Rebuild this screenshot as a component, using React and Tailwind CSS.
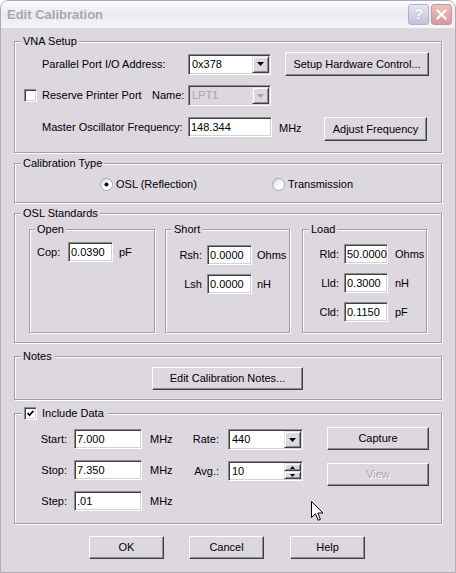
import React from 'react';

function Group({ label, className = '', labelClass = 'ml-[6px]', children }) {
  return (
    <div className={`border border-[#a29ea7] shadow-[inset_1px_1px_0_#fff,1px_1px_0_#fff] ${className}`}>
      <div className={`-mt-[8px] h-[14px] leading-[14px] w-fit px-[2px] bg-[#ddd7df] ${labelClass}`}>{label}</div>
      {children}
    </div>
  );
}

function Sunken({ className = '', bg = 'bg-white', children }) {
  return (
    <div className={`border border-t-[#8d8a92] border-l-[#8d8a92] border-r-white border-b-white shadow-[inset_1px_1px_0_#404040,inset_-1px_-1px_0_#d4d0d8] ${bg} ${className}`}>
      {children}
    </div>
  );
}

function Field({ className = '', value }) {
  return (
    <Sunken className={`flex items-center pl-[2px] ${className}`}>
      <span className="whitespace-nowrap">{value}</span>
    </Sunken>
  );
}

function Raised({ className = '', children }) {
  return (
    <div className={`border border-t-[#e4e0e8] border-l-[#e4e0e8] border-r-[#404040] border-b-[#404040] shadow-[inset_1px_1px_0_#fff,inset_-1px_-1px_0_#8d8a92] bg-[#ddd7df] flex items-center justify-center ${className}`}>
      {children}
    </div>
  );
}

function Combo({ className = '', value, disabled }) {
  return (
    <Sunken className={`flex p-[1px] ${className}`} bg={disabled ? 'bg-[#ddd7df]' : 'bg-white'}>
      <div className={`flex-1 flex items-center pl-[2px] ${disabled ? 'text-[#a8a4ac]' : ''}`}>{value}</div>
      <Raised className="w-[17px] h-full">
        <svg width="7" height="4" viewBox="0 0 7 4">
          <path d="M0 0h7L3.5 4z" fill={disabled ? '#a8a4ac' : '#000'} />
        </svg>
      </Raised>
    </Sunken>
  );
}

function Spinner({ className = '', value }) {
  return (
    <Sunken className={`flex p-[1px] ${className}`}>
      <div className="flex-1 flex items-center pl-[2px]">{value}</div>
      <div className="w-[17px] h-full flex flex-col">
        <Raised className="flex-1">
          <svg width="5" height="3" viewBox="0 0 5 3">
            <path d="M0 3h5L2.5 0z" fill="#000" />
          </svg>
        </Raised>
        <Raised className="flex-1">
          <svg width="5" height="3" viewBox="0 0 5 3">
            <path d="M0 0h5L2.5 3z" fill="#000" />
          </svg>
        </Raised>
      </div>
    </Sunken>
  );
}

function Btn({ className = '', disabled, children }) {
  return (
    <div
      className={`border border-t-white border-l-white border-r-[#404040] border-b-[#404040] shadow-[inset_-1px_-1px_0_#8d8a92] flex items-center justify-center ${
        disabled ? 'text-[#a8a4ac] [text-shadow:1px_1px_0_#fff]' : 'text-black'
      } ${className}`}
    >
      {children}
    </div>
  );
}

function Check({ checked }) {
  return (
    <Sunken className="w-[13px] h-[13px] flex items-center justify-center shrink-0">
      {checked && (
        <svg width="7" height="7" viewBox="0 0 7 7">
          <path d="M0.5 3l2 2.2L6.5 0.8" stroke="#000" strokeWidth="1.7" fill="none" />
        </svg>
      )}
    </Sunken>
  );
}

function Radio({ checked }) {
  return (
    <svg width="13" height="13" viewBox="0 0 13 13" className="shrink-0">
      <defs>
        <linearGradient id="rg" x1="0" y1="0" x2="1" y2="1">
          <stop offset="0" stopColor="#d3d0d8" />
          <stop offset="0.6" stopColor="#fff" />
        </linearGradient>
      </defs>
      <circle cx="6.5" cy="6.5" r="6" fill="url(#rg)" stroke="#a9a6ae" />
      {checked && <circle cx="6.5" cy="6.5" r="2" fill="#000" />}
    </svg>
  );
}

function LabeledRow({ label, labelW = 'w-[36px]', children, className = '' }) {
  return (
    <div className={`flex items-center h-[20px] ${className}`}>
      <div className={`${labelW} text-right`}>{label}</div>
      {children}
    </div>
  );
}

export default function App() {
  return (
    <div className="w-[456px] h-[573px] relative overflow-hidden font-['Liberation_Sans',Arial,sans-serif] text-[11px] text-black bg-[#ddd7df] border border-[#aeacb6] rounded-t-[8px]">
      {/* title bar */}
      <div className="h-[27px] bg-linear-to-b from-[#fdfdfe] via-[#ebeaef] to-[#f6f5f8] flex items-center pl-[6px] pr-[3px]">
        <div className="flex-1 font-bold text-[13px] text-[#a9a8ae]">Edit Calibration</div>
        <div className="w-[21px] h-[21px] rounded-[3px] border border-[#b4b2c6] bg-linear-to-b from-[#e6e5f1] to-[#c4c2d7] flex items-center justify-center text-white font-bold text-[15px] [text-shadow:0_0_1px_#8f8da3]">
          ?
        </div>
        <div className="w-[21px] h-[21px] ml-[2px] rounded-[3px] border border-[#c99498] bg-linear-to-b from-[#ecc1c3] to-[#d49a9d] flex items-center justify-center">
          <svg width="11" height="11" viewBox="0 0 11 11">
            <path d="M1.5 1.5l8 8M9.5 1.5l-8 8" stroke="#fff" strokeWidth="2.4" strokeLinecap="round" />
          </svg>
        </div>
      </div>

      {/* client */}
      <div className="px-[13px] flex flex-col">
        <Group label="VNA Setup" className="mt-[13px] h-[112px]">
          <div className="flex items-center h-[24px] mt-[4px] pl-[27px]">
            <div className="w-[146px]">Parallel Port I/O Address:</div>
            <Combo className="w-[83px] h-[21px]" value="0x378" />
            <Btn className="ml-[14px] w-[144px] h-[24px]">Setup Hardware Control...</Btn>
          </div>
          <div className="flex items-center h-[21px] mt-[9px] pl-[9px]">
            <Check />
            <div className="ml-[5px] w-[110px]">Reserve Printer Port</div>
            <div className="w-[36px]">Name:</div>
            <Combo className="w-[83px] h-[21px]" value="LPT1" disabled />
          </div>
          <div className="flex items-start h-[24px] mt-[11px] pl-[27px]">
            <div className="w-[146px] h-[20px] flex items-center">Master Oscillator Frequency:</div>
            <Field className="w-[84px] h-[20px]" value="148.344" />
            <div className="ml-[7px] w-[45px] h-[22px] flex items-center">MHz</div>
            <Btn className="w-[103px] h-[24px]">Adjust Frequency</Btn>
          </div>
        </Group>

        <Group label="Calibration Type" className="mt-[10px] h-[40px]">
          <div className="flex items-center h-[14px] mt-[7px] pl-[85px]">
            <div className="w-[172px] flex items-center gap-[3px]">
              <Radio checked />
              <span>OSL (Reflection)</span>
            </div>
            <div className="flex items-center gap-[3px]">
              <Radio />
              <span>Transmission</span>
            </div>
          </div>
        </Group>

        <Group label="OSL Standards" className="mt-[10px] h-[130px]">
          <div className="flex mt-[9px] pl-[14px]">
            <Group label="Open" labelClass="ml-[5px]" className="w-[126px] h-[104px]">
              <div className="flex items-center h-[20px] mt-[6px] pl-[7px]">
                <div className="w-[31px]">Cop:</div>
                <Field className="w-[45px] h-[20px]" value="0.0390" />
                <div className="ml-[6px]">pF</div>
              </div>
            </Group>
            <Group label="Short" className="ml-[10px] w-[125px] h-[104px]">
              <LabeledRow label="Rsh:" className="mt-[9px]">
                <Field className="ml-[5px] w-[45px] h-[20px]" value="0.0000" />
                <div className="ml-[5px]">Ohms</div>
              </LabeledRow>
              <LabeledRow label="Lsh" className="mt-[9px]">
                <Field className="ml-[5px] w-[45px] h-[20px]" value="0.0000" />
                <div className="ml-[5px]">nH</div>
              </LabeledRow>
            </Group>
            <Group label="Load" className="ml-[12px] w-[125px] h-[104px]">
              <LabeledRow label="Rld:" className="mt-[8px]">
                <Field className="ml-[5px] w-[44px] h-[20px]" value="50.0000" />
                <div className="ml-[7px]">Ohms</div>
              </LabeledRow>
              <LabeledRow label="Lld:" className="mt-[9px]">
                <Field className="ml-[5px] w-[44px] h-[20px]" value="0.3000" />
                <div className="ml-[7px]">nH</div>
              </LabeledRow>
              <LabeledRow label="Cld:" className="mt-[9px]">
                <Field className="ml-[5px] w-[44px] h-[20px]" value="0.1150" />
                <div className="ml-[7px]">pF</div>
              </LabeledRow>
            </Group>
          </div>
        </Group>

        <Group label="Notes" className="mt-[13px] h-[44px]">
          <Btn className="mt-[4px] ml-[137px] w-[151px] h-[23px]">Edit Calibration Notes...</Btn>
        </Group>

        <div className="mt-[13px] h-[111px] border border-[#a29ea7] shadow-[inset_1px_1px_0_#fff,1px_1px_0_#fff]">
          <div className="-mt-[8px] h-[14px] w-fit ml-[7px] pl-[2px] pr-[4px] bg-[#ddd7df] flex items-center">
            <Check checked />
            <span className="ml-[5px]">Include Data</span>
          </div>
          <div className="flex items-start">
            <div className="mt-[9px] flex flex-col gap-[11px]">
              {[
                ['Start:', '7.000'],
                ['Stop:', '7.350'],
                ['Step:', '.01'],
              ].map(([l, v]) => (
                <LabeledRow key={l} label={l} labelW="w-[52px]">
                  <Field className="ml-[7px] w-[68px] h-[20px]" value={v} />
                  <div className="ml-[8px] w-[25px]">MHz</div>
                </LabeledRow>
              ))}
            </div>
            <div className="mt-[9px] flex flex-col">
              <div className="flex items-center h-[21px]">
                <div className="w-[44px] text-right">Rate:</div>
                <Combo className="ml-[9px] w-[75px] h-[21px]" value="440" />
              </div>
              <div className="flex items-center h-[20px] mt-[11px]">
                <div className="w-[44px] text-right">Avg.:</div>
                <Spinner className="ml-[9px] w-[75px] h-[20px]" value="10" />
              </div>
            </div>
            <div className="mt-[7px] ml-[24px] flex flex-col">
              <Btn className="w-[102px] h-[23px]">Capture</Btn>
              <Btn className="mt-[13px] w-[102px] h-[23px]" disabled>
                View
              </Btn>
            </div>
          </div>
        </div>

        <div className="flex mt-[12px]">
          <Btn className="ml-[75px] w-[75px] h-[23px]">OK</Btn>
          <Btn className="ml-[25px] w-[75px] h-[23px]">Cancel</Btn>
          <Btn className="ml-[26px] w-[75px] h-[23px]">Help</Btn>
        </div>
      </div>

      {/* mouse pointer */}
      <svg className="absolute left-[310px] top-[500px]" width="13" height="21" viewBox="0 0 13 21">
        <path d="M0.5 0.5V16.5L4.5 12.8L7.2 19.3L9.4 18.3L6.8 12H12Z" fill="#fff" stroke="#000" strokeWidth="1" strokeLinejoin="miter" />
      </svg>
    </div>
  );
}
